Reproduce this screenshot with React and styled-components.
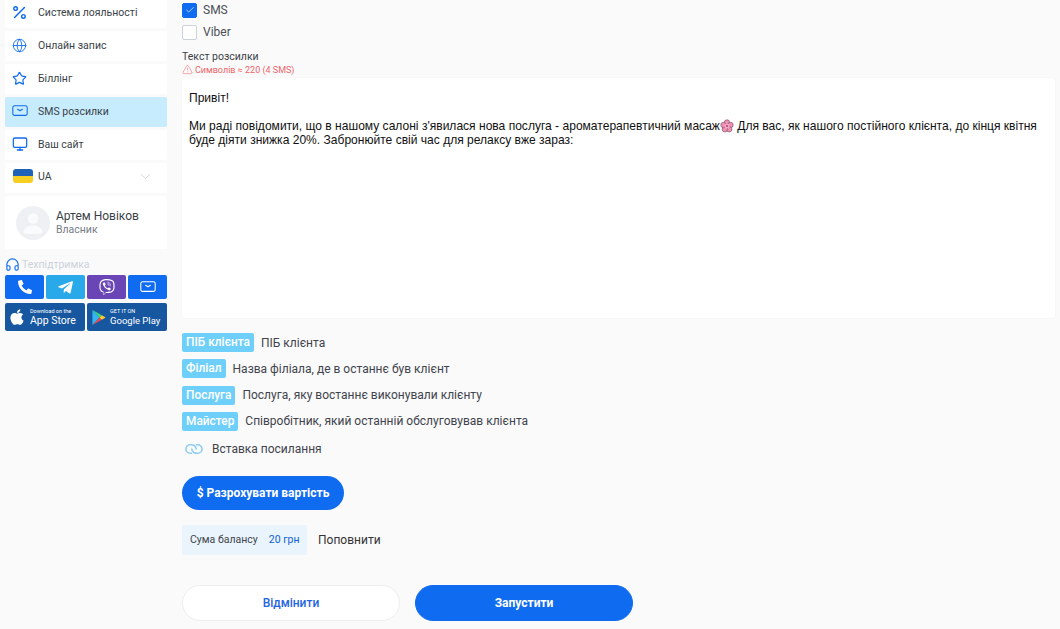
import styled, { createGlobalStyle } from "styled-components";
import { Percent, Globe, Star, Monitor, ChevronDown, Headphones, Check, TriangleAlert } from "lucide-react";
import { FaApple, FaPhoneAlt, FaTelegramPlane, FaViber } from "react-icons/fa";

const GlobalStyle = createGlobalStyle`
  html, body {
    margin: 0;
    height: 629px;
    overflow: hidden;
    background: #fafafa;
    font-family: Roboto, "Noto Sans", sans-serif;
    color: #333;
  }
`;

const MailIcon = ({ size = 16, color = "#0f6bf0" }) => (
  <svg width={size} height={size * 0.7} viewBox="0 0 20 14" fill="none" stroke={color} strokeWidth="1.3">
    <rect x="1" y="1" width="18" height="12" rx="2" />
    <path d="M7 5.400 10 7.200l3-1.800" strokeLinecap="round" strokeLinejoin="round" />
  </svg>
);

const Flower = () => (
  <FlowerSvg viewBox="0 0 20 20">
    <g fill="#ef8fb4" stroke="#6b4a58" strokeWidth="0.8">
      <circle cx="10" cy="5" r="3.9" />
      <circle cx="15" cy="8.6" r="3.9" />
      <circle cx="13.1" cy="14.6" r="3.9" />
      <circle cx="6.9" cy="14.6" r="3.9" />
      <circle cx="5" cy="8.6" r="3.9" />
    </g>
    <circle cx="10" cy="10" r="3.6" fill="#f4a9c6" />
    <circle cx="10" cy="10" r="1.4" fill="#c2386f" />
  </FlowerSvg>
);

const GooglePlayIcon = () => (
  <svg width="14" height="17" viewBox="0 0 16 19">
    <path d="M0.5 0.8 8.6 9.5 0.5 18.2z" fill="#35b6f2" />
    <path d="M0.5 0.8 11.3 6.8 8.6 9.5z" fill="#3fd27f" />
    <path d="M0.5 18.2 11.3 12.2 8.6 9.5z" fill="#ee4650" />
    <path d="M11.3 6.8 15.6 9.5 11.3 12.2 8.6 9.5z" fill="#fcc92f" />
  </svg>
);

const LinkIcon = () => (
  <svg width="20" height="12" viewBox="0 0 20 12" fill="none" stroke="#8fcdf2" strokeWidth="1.6" strokeLinecap="round">
    <path d="M7.500 10.300H6.200a4.300 4.300 0 0 1 0-8.600c3-.2 5.800 1 6 4.300" />
    <path d="M12.500 1.700h1.300a4.300 4.300 0 0 1 0 8.600c-3 .2-5.800-1-6-4.300" />
  </svg>
);

const AvatarIcon = () => (
  <svg width="34" height="34" viewBox="0 0 34 34">
    <circle cx="17" cy="17" r="17" fill="#eef0f3" />
    <circle cx="17" cy="12.5" r="5.2" fill="#fafbfc" />
    <path d="M7.5 27c0-5 4.2-7.6 9.5-7.6S26.500 22 26.500 27c-2.500 1.200-16.500 1.200-19 0z" fill="#fafbfc" />
  </svg>
);

const navItems = [
  { label: "Система лояльності", icon: <Percent size={21} strokeWidth={2.1} /> },
  { label: "Онлайн запис", icon: <Globe size={15} strokeWidth={1.4} /> },
  { label: "Біллінг", icon: <Star size={15} strokeWidth={1.9} /> },
  { label: "SMS розсилки", icon: <MailIcon />, active: true },
  { label: "Ваш сайт", icon: <Monitor size={16} strokeWidth={1.9} /> },
];

const tags = [
  { tag: "ПІБ клієнта", text: "ПІБ клієнта" },
  { tag: "Філіал", text: "Назва філіала, де в останнє був клієнт" },
  { tag: "Послуга", text: "Послуга, яку востаннє виконували клієнту" },
  { tag: "Майстер", text: "Співробітник, який останній обслуговував клієнта" },
];

export default function App() {
  return (
    <Page>
      <GlobalStyle />
      <Sidebar>
        {navItems.map((item) => (
          <NavItem key={item.label} $active={item.active}>
            <NavIcon>{item.icon}</NavIcon>
            {item.label}
          </NavItem>
        ))}
        <LangItem>
          <Flag />
          UA
          <LangChevron><ChevronDown size={17} strokeWidth={1} /></LangChevron>
        </LangItem>
        <Profile>
          <AvatarIcon />
          <div>
            <ProfileName>Артем Новіков</ProfileName>
            <ProfileRole>Власник</ProfileRole>
          </div>
        </Profile>
        <SupportLabel>
          <Headphones size={15} strokeWidth={1.8} color="#0f6bf0" />
          Техпідтримка
        </SupportLabel>
        <ContactRow>
          <ContactButton $bg="#0f6bf0"><FaPhoneAlt size={14} /></ContactButton>
          <ContactButton $bg="#29a9ea"><FaTelegramPlane size={17} /></ContactButton>
          <ContactButton $bg="#6a45b5"><FaViber size={16} /></ContactButton>
          <ContactButton $bg="#0f6bf0"><MailIcon size={16} color="#fff" /></ContactButton>
        </ContactRow>
        <StoreRow>
          <StoreButton $pad={3} $gap={4}>
            <FaApple size={18} />
            <StoreText $size={10.5}>
              <small>Download on the</small>
              App Store
            </StoreText>
          </StoreButton>
          <StoreButton $pad={5} $gap={4}>
            <GooglePlayIcon />
            <StoreText $size={9.5}>
              <small>GET IT ON</small>
              Google Play
            </StoreText>
          </StoreButton>
        </StoreRow>
      </Sidebar>

      <Main>
        <CheckRow>
          <CheckBox $checked><Check size={10} strokeWidth={1.6} color="#fff" /></CheckBox>
          SMS
        </CheckRow>
        <CheckRow>
          <CheckBox />
          Viber
        </CheckRow>
        <FieldLabel>Текст розсилки</FieldLabel>
        <Warning>
          <TriangleAlert size={11} strokeWidth={1.2} />
          Символів ≈ 220 (4 SMS)
        </Warning>
        <MessageBox>
          <p>Привіт!</p>
          <p>
            Ми раді повідомити, що в нашому салоні з'явилася нова послуга - ароматерапевтичний масаж
            <Flower /> Для вас, як нашого постійного клієнта, до кінця квітня буде діяти знижка 20%.
            Забронюйте свій час для релаксу вже зараз:
          </p>
        </MessageBox>
        <TagList>
          {tags.map((t) => (
            <TagRow key={t.tag}>
              <Tag>{t.tag}</Tag>
              {t.text}
            </TagRow>
          ))}
        </TagList>
        <LinkRow>
          <LinkIcon />
          Вставка посилання
        </LinkRow>
        <CalcButton>$ Разрохувати вартість</CalcButton>
        <BalanceRow>
          <BalanceBox>
            Сума балансу
            <BalanceValue>20 грн</BalanceValue>
          </BalanceBox>
          <TopUp>Поповнити</TopUp>
        </BalanceRow>
        <Actions>
          <ActionButton>Відмінити</ActionButton>
          <ActionButton $primary>Запустити</ActionButton>
        </Actions>
      </Main>
    </Page>
  );
}

const Page = styled.div`
  display: flex;
  align-items: flex-start;
  height: 629px;
  overflow: hidden;
`;

const Sidebar = styled.aside`
  width: 162px;
  margin: -2px 0 0 5px;
  display: flex;
  flex-direction: column;
  gap: 3px;
  flex-shrink: 0;
`;

const NavItem = styled.div`
  height: 30px;
  box-sizing: border-box;
  display: flex;
  align-items: center;
  padding: 0 0 2px 6px;
  border-radius: 2px;
  font-size: 10.5px;
  color: #3a3f47;
  background: ${(p) => (p.$active ? "#c7ecfd" : "#fff")};
`;

const NavIcon = styled.span`
  width: 17px;
  margin-right: 10px;
  display: flex;
  justify-content: center;
  color: #0f6bf0;
`;

const LangItem = styled(NavItem)`
  padding: 0 0 4px 8px;
`;

const Flag = styled.span`
  width: 20px;
  height: 14px;
  margin-right: 5px;
  border-radius: 3px;
  background: linear-gradient(#1f62b8 50%, #f7cf22 50%);
`;

const LangChevron = styled.span`
  margin-left: auto;
  margin-right: 13px;
  display: flex;
  color: #c3c8cf;
`;

const Profile = styled.div`
  height: 53px;
  background: #fff;
  border-radius: 2px;
  display: flex;
  align-items: center;
  gap: 6px;
  padding-left: 11px;
`;

const ProfileName = styled.div`
  font-size: 12px;
  line-height: 14px;
  color: #3a3f47;
`;

const ProfileRole = styled.div`
  font-size: 10.5px;
  line-height: 13px;
  color: #757c86;
`;

const SupportLabel = styled.div`
  height: 20px;
  margin-top: 2px;
  display: flex;
  align-items: center;
  gap: 2px;
  font-size: 10.5px;
  color: #ccd2da;
`;

const ContactRow = styled.div`
  display: grid;
  grid-template-columns: repeat(4, 39px);
  gap: 2px;
  margin-top: -2px;
`;

const ContactButton = styled.div`
  height: 24px;
  border-radius: 2px;
  display: flex;
  align-items: center;
  justify-content: center;
  color: #fff;
  background: ${(p) => p.$bg};
`;

const StoreRow = styled.div`
  display: grid;
  grid-template-columns: 80px 80px;
  gap: 2px;
  margin-top: 1px;
`;

const StoreButton = styled.div`
  height: 28px;
  border-radius: 2px;
  background: #17579f;
  color: #fff;
  display: flex;
  align-items: center;
  gap: ${(p) => p.$gap}px;
  padding-left: ${(p) => p.$pad}px;
`;

const StoreText = styled.div`
  display: flex;
  flex-direction: column;
  font-size: ${(p) => p.$size}px;
  line-height: 11px;
  white-space: nowrap;

  small {
    font-size: 5.5px;
    line-height: 7px;
  }
`;

const Main = styled.main`
  margin-left: 15px;
  width: 873px;
  flex-shrink: 0;
  padding-top: 2px;
`;

const CheckRow = styled.label`
  display: flex;
  align-items: center;
  gap: 6px;
  height: 16px;
  margin-bottom: 6px;
  font-size: 12px;
  color: #4a4f57;
`;

const CheckBox = styled.span`
  width: 15px;
  height: 15px;
  box-sizing: border-box;
  border-radius: 2px;
  display: flex;
  align-items: center;
  justify-content: center;
  background: ${(p) => (p.$checked ? "#0f6bf0" : "#fff")};
  border: 1px solid ${(p) => (p.$checked ? "#0f6bf0" : "#ccd2da")};
`;

const FieldLabel = styled.div`
  margin-top: 10px;
  font-size: 10.5px;
  line-height: 13px;
  color: #3a3f47;
`;

const Warning = styled.div`
  display: flex;
  align-items: center;
  gap: 2px;
  height: 13px;
  margin-bottom: 2px;
  font-size: 9px;
  color: #f0666a;
`;

const MessageBox = styled.div`
  height: 240px;
  box-sizing: border-box;
  padding: 13px 18px 13px 7px;
  background: #fff;
  border-radius: 2px;
  box-shadow: 0 0 1px #e6e6e6;
  font-family: "Liberation Sans", Arial, sans-serif;
  font-size: 12.05px;
  line-height: 14px;
  color: #111;

  p {
    margin: 0 0 14px;
  }
`;

const FlowerSvg = styled.svg`
  width: 14px;
  height: 14px;
  vertical-align: -3px;
`;

const TagList = styled.div`
  margin-top: 15px;
  display: flex;
  flex-direction: column;
  gap: 7.3px;
`;

const TagRow = styled.div`
  display: flex;
  align-items: center;
  gap: 7px;
  height: 19px;
  font-size: 12px;
  color: #3f444c;
`;

const Tag = styled.span`
  height: 19px;
  padding: 0 4px;
  border-radius: 2px;
  background: #6fcffb;
  color: #fff;
  font-weight: 500;
  font-size: 11.9px;
  line-height: 19px;
  white-space: nowrap;
`;

const LinkRow = styled.div`
  display: flex;
  align-items: center;
  gap: 8px;
  height: 16px;
  margin: 10px 0 0 2px;
  font-size: 12px;
  color: #3f444c;
`;

const CalcButton = styled.button`
  display: block;
  width: 162px;
  height: 34px;
  margin-top: 19px;
  padding: 0;
  border: 0;
  border-radius: 17px;
  background: #0f6bf0;
  color: #fff;
  font-family: inherit;
  font-size: 12px;
  font-weight: 700;
`;

const BalanceRow = styled.div`
  display: flex;
  align-items: center;
  gap: 11px;
  margin-top: 15px;
`;

const BalanceBox = styled.div`
  width: 125px;
  height: 30px;
  box-sizing: border-box;
  padding-left: 8px;
  display: flex;
  align-items: center;
  gap: 11px;
  background: #e9f4fd;
  border-radius: 2px;
  font-size: 10.5px;
  color: #3f444c;
`;

const BalanceValue = styled.span`
  color: #0f5fd8;
`;

const TopUp = styled.span`
  font-size: 12px;
  color: #333;
`;

const Actions = styled.div`
  display: flex;
  gap: 15px;
  margin-top: 30px;
`;

const ActionButton = styled.button`
  width: 218px;
  height: 36px;
  padding: 0;
  border-radius: 18px;
  border: 1px solid ${(p) => (p.$primary ? "#0f6bf0" : "#eeeeee")};
  background: ${(p) => (p.$primary ? "#0f6bf0" : "#fff")};
  color: ${(p) => (p.$primary ? "#fff" : "#1f66e0")};
  font-family: inherit;
  font-size: 12px;
  font-weight: ${(p) => (p.$primary ? 700 : 500)};
`;
